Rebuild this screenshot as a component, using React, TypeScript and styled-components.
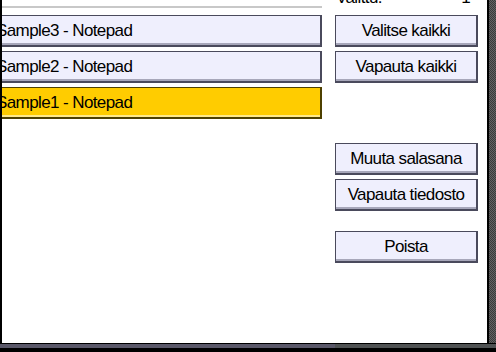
import React from "react";
import styled, { createGlobalStyle } from "styled-components";

const GlobalStyle = createGlobalStyle`
  html, body {
    margin: 0;
    padding: 0;
    background: #000;
  }
  body {
    font-family: "Liberation Sans", Arial, sans-serif;
  }
`;

const files = [
  { name: "Sample3 - Notepad", selected: false },
  { name: "Sample2 - Notepad", selected: false },
  { name: "Sample1 - Notepad", selected: true },
];

const App = () => {
  return (
    <Frame>
      <GlobalStyle />
      <Body>
        <Screen>
          <LeftCol>
            <Caption>
              <CaptionText>Tiedoston nimi</CaptionText>
            </Caption>
            <Rule />
            <FileList>
              {files.map((file) => (
                <FileButton key={file.name} $selected={file.selected}>
                  {file.name}
                </FileButton>
              ))}
            </FileList>
          </LeftCol>

          <RightCol>
            <Caption $tall>
              <CaptionText>Valittu:</CaptionText>
              <CaptionText>1</CaptionText>
            </Caption>
            <ActionGroup>
              <ActionButton>Valitse kaikki</ActionButton>
              <ActionButton>Vapauta kaikki</ActionButton>
            </ActionGroup>
            <ActionGroup $gap={60}>
              <ActionButton>Muuta salasana</ActionButton>
              <ActionButton>Vapauta tiedosto</ActionButton>
            </ActionGroup>
            <ActionGroup $gap={20}>
              <ActionButton>Poista</ActionButton>
            </ActionGroup>
          </RightCol>
        </Screen>
        <ScrollStrip />
      </Body>
      <BottomBar>
        <BarSegment $width={335} $color="#5a5869" />
        <BarSegment $color="#4f5253" />
      </BottomBar>
    </Frame>
  );
};

export default App;

const Frame = styled.div`
  width: 496px;
  height: 352px;
  background: #000;
  display: flex;
  flex-direction: column;
  overflow: hidden;
`;

const Body = styled.div`
  display: flex;
  height: 343px;
  padding-left: 2px;
  gap: 2px;
`;

const Screen = styled.div`
  flex: 1;
  background: #fff;
  overflow: hidden;
  display: grid;
  grid-template-columns: 320px 143px;
  column-gap: 13px;
  align-items: start;
`;

const ScrollStrip = styled.div`
  width: 7px;
  background: repeating-conic-gradient(#3a3a3a 0 25%, #626262 0 50%) 0 0 / 2px 2px;
`;

const BottomBar = styled.div`
  display: flex;
  height: 4px;
  margin-top: 1px;
`;

const BarSegment = styled.div<{ $width?: number; $color: string }>`
  background: ${(p) => p.$color};
  ${(p) => (p.$width ? `width: ${p.$width}px;` : "flex: 1;")}
`;

const LeftCol = styled.div`
  margin-left: -16px;
  display: flex;
  flex-direction: column;
`;

const RightCol = styled.div`
  display: flex;
  flex-direction: column;
`;

const Caption = styled.div<{ $tall?: boolean }>`
  height: ${(p) => (p.$tall ? 7 : 4)}px;
  margin-bottom: 2px;
  overflow: hidden;
  display: flex;
  align-items: flex-end;
  justify-content: space-between;
  padding: 0 ${(p) => (p.$tall ? 8 : 10)}px 0 ${(p) => (p.$tall ? 1 : 34)}px;
`;

const CaptionText = styled.span`
  font-size: 17px;
  line-height: 18px;
  letter-spacing: -0.6px;
  color: #000;
  white-space: nowrap;
`;

const Rule = styled.div`
  height: 2px;
  background: #c8c8c8;
  margin-bottom: 7px;
`;

const FileList = styled.div`
  display: flex;
  flex-direction: column;
  gap: 4px;
`;

const buttonBase = `
  box-sizing: border-box;
  height: 32px;
  border: 1px solid #4a4a5c;
  border-right-width: 2px;
  border-bottom-width: 2px;
  font-family: "Liberation Sans", Arial, sans-serif;
  font-size: 17px;
  letter-spacing: -0.6px;
  color: #000;
  white-space: nowrap;
  display: flex;
  align-items: center;
`;

const FileButton = styled.div<{ $selected?: boolean }>`
  ${buttonBase}
  padding-left: 9px;
  background: ${(p) => (p.$selected ? "#ffcc00" : "#efeffd")};
  border-color: ${(p) => (p.$selected ? "#4d4000" : "#4a4a5c")};
  box-shadow: inset 0 -2px 0 ${(p) => (p.$selected ? "#ffe98a" : "#a7a7ba")};
`;

const ActionGroup = styled.div<{ $gap?: number }>`
  display: flex;
  flex-direction: column;
  gap: 4px;
  margin-top: ${(p) => p.$gap ?? 6}px;
`;

const ActionButton = styled.div`
  ${buttonBase}
  justify-content: center;
  background: #efeffd;
  box-shadow: inset 0 -2px 0 #a7a7ba;
`;
